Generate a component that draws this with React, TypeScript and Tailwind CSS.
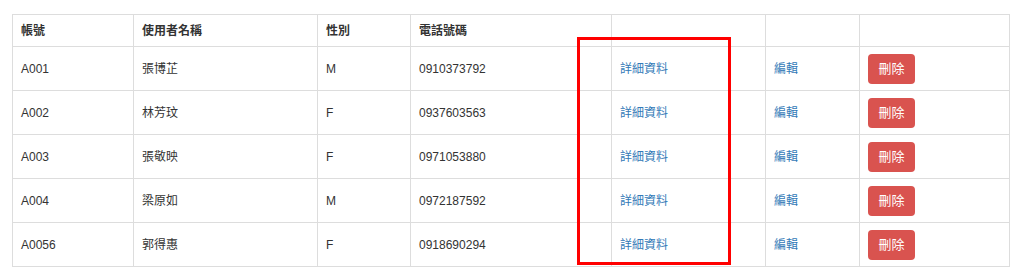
import React from "react";

const rows = [
  { id: "A001", name: "張博芷", sex: "M", phone: "0910373792" },
  { id: "A002", name: "林芳玟", sex: "F", phone: "0937603563" },
  { id: "A003", name: "張敬映", sex: "F", phone: "0971053880" },
  { id: "A004", name: "梁原如", sex: "M", phone: "0972187592" },
  { id: "A0056", name: "郭得惠", sex: "F", phone: "0918690294" },
];

const font = { fontFamily: '"Liberation Sans", "Noto Sans CJK TC", sans-serif' };

export default function App() {
  return (
    <div className="relative w-[1024px] h-[273px] bg-white text-[#333] text-[12px]" style={font}>
      <div className="pt-[14px] pl-[12px]">
        <table className="table-fixed border-collapse w-[997px]">
          <colgroup>
            <col className="w-[121px]" />
            <col className="w-[184px]" />
            <col className="w-[93px]" />
            <col className="w-[201px]" />
            <col className="w-[154px]" />
            <col className="w-[94px]" />
            <col className="w-[150px]" />
          </colgroup>
          <thead>
            <tr className="h-[32px]">
              {["帳號", "使用者名稱", "性別", "電話號碼", "", "", ""].map((h, i) => (
                <th key={i} className="border border-[#ddd] px-[8px] text-left font-bold align-middle">
                  {h}
                </th>
              ))}
            </tr>
          </thead>
          <tbody>
            {rows.map((r) => (
              <tr key={r.id} className="h-[44px]">
                <td className="border border-[#ddd] px-[8px] align-middle">{r.id}</td>
                <td className="border border-[#ddd] px-[8px] align-middle">{r.name}</td>
                <td className="border border-[#ddd] px-[8px] align-middle">{r.sex}</td>
                <td className="border border-[#ddd] px-[8px] align-middle">{r.phone}</td>
                <td className="border border-[#ddd] px-[8px] align-middle">
                  <a className="text-[#337ab7]">詳細資料</a>
                </td>
                <td className="border border-[#ddd] px-[8px] align-middle">
                  <a className="text-[#337ab7]">編輯</a>
                </td>
                <td className="border border-[#ddd] px-[8px] align-middle">
                  <button className="w-[47px] h-[30px] rounded-[4px] bg-[#d9534f] text-white text-[13px] flex items-center justify-center">
                    刪除
                  </button>
                </td>
              </tr>
            ))}
          </tbody>
        </table>
      </div>
      <div className="absolute left-[577px] top-[37px] w-[154px] h-[228px] border-[3px] border-[#ff0000]" />
    </div>
  );
}
